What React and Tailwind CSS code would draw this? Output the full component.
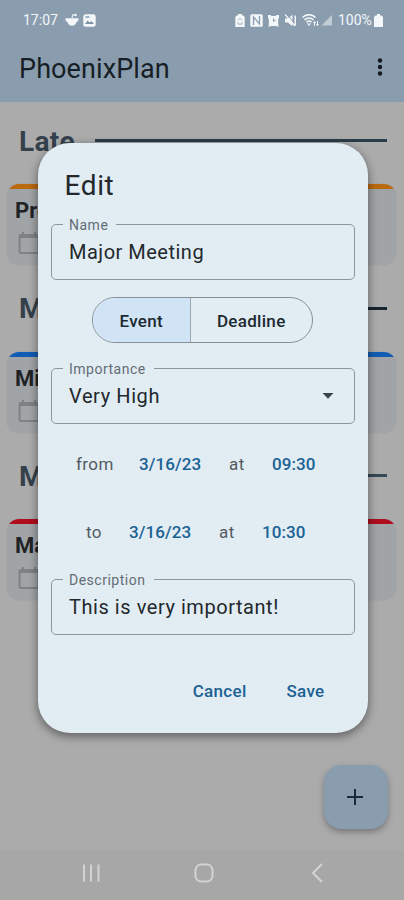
import React from "react";

const sections = [
  { heading: "Late", item: "Pro", accent: "bg-[#bb6a0d]", rule: "bg-[#2b3d49]" },
  { heading: "M", item: "Mi", accent: "bg-[#125cb4]", rule: "bg-[#17252f]" },
  { heading: "M", item: "Ma", accent: "bg-[#b00d1e]", rule: "bg-[#364854]" },
];

function StatusBar() {
  return (
    <div className="flex h-10 items-center pl-[23px] pr-[21px] text-[14px] text-[#f3f7fa]">
      <span className="w-[37px]">17:07</span>
      <svg className="ml-[5px] h-[14px] w-[14px]" viewBox="0 0 14 14" fill="currentColor">
        <path d="M.6 5.200h12.800c.6 2-.6 3.300-1.800 3.500C11 11.500 9.300 12.700 7 12.700s-4-1.200-4.600-4C1.200 8.500 0 7.200.600 5.200Z" />
        <circle cx="10.500" cy="2" r="1.300" />
        <path d="M7 5.200 7.700 1.700l2.300.300" fill="none" stroke="currentColor" />
      </svg>
      <svg className="ml-[4px] h-[13px] w-[13px]" viewBox="0 0 13 13">
        <rect x=".3" y=".3" width="12.400" height="12.400" rx="2.500" fill="currentColor" />
        <path d="m2 10 2.600-3.500 2 2 1.700-1.500L11 10Z" fill="#7d92a4" />
        <path d="M2.500 3h4" stroke="#8a9dae" strokeWidth="1.500" />
      </svg>
      <div className="ml-auto flex items-center">
        <svg className="h-[13px] w-[10px]" viewBox="0 0 10 13">
          <path d="M3 0h4v1.500h1.500L9.700 3v10H.300V3l1.200-1.500H3Z" fill="currentColor" />
          <path d="M3 6.500 5 4.200l2 2.300M3 8v2.200h4V8" fill="none" stroke="#a9b7c3" />
        </svg>
        <svg className="ml-[5px] h-[13px] w-[13px]" viewBox="0 0 13 13">
          <rect x=".3" y=".3" width="12.400" height="12.400" rx="1.500" fill="currentColor" />
          <path d="M3.500 11V3l6 7V2" fill="none" stroke="#8a9dae" strokeWidth="1.300" />
        </svg>
        <svg className="ml-[5px] h-[13px] w-[11px]" viewBox="0 0 11 13">
          <path d="M0 1h2.500L3.500 2h4l1-1H11v3l-.8 1v6.500l.8 1H9L8 12H3l-1 .5H0l.8-1V5L0 4Z" fill="currentColor" />
          <path d="M5.500 4.300v3L7.700 6" fill="none" stroke="#8a9dae" />
        </svg>
        <svg className="ml-[6px] h-[13px] w-[12px]" viewBox="0 0 12 13" fill="currentColor">
          <path d="M0 4.500h3L7.500.800v11.400L3 8.500H0ZM9.500 1.500H11v10H9.500Z" />
          <path d="m0 .500 10 11.500" stroke="currentColor" strokeWidth="1.200" />
          <path d="m2 .500 7 8" stroke="#8a9dae" strokeWidth="1" />
        </svg>
        <svg className="ml-[5px] h-[13px] w-[17px]" viewBox="0 0 17 13" fill="none" stroke="currentColor">
          <path d="M.500 3.500C4-.300 10-.300 13.500 3.500M2.500 6C5 3.300 9 3.300 11.500 6M4.500 8.300c1.500-1.600 3.500-1.600 5 0" strokeWidth="1.500" />
          <path d="m5.500 9.500 1.500 2 1.500-2" fill="currentColor" />
          <path d="M12.500 12V7.500m-1.300 1.300 1.300-1.300 1.300 1.300M15.500 7v4.500m-1.200-1.200 1.200 1.200 1-1.200" />
        </svg>
        <svg className="ml-[2px] h-[12px] w-[11px]" viewBox="0 0 11 12">
          <path d="M11 1v10.500H.500Z" fill="#c2ccd5" />
        </svg>
        <span className="ml-[6px] w-[35px] whitespace-nowrap text-[14px]">100%</span>
        <svg className="ml-[1px] h-[13px] w-[9px]" viewBox="0 0 9 13" fill="currentColor">
          <path d="M3 0h3v1.500h1.500L9 3v10H0V3l1.500-1.500H3Z" />
        </svg>
      </div>
    </div>
  );
}

function AgendaSection({ heading, item, accent, rule }) {
  return (
    <section className="h-[167.500px]">
      <div className="flex h-[59px] items-center gap-[19px] pl-[19px] pr-[17px]">
        <h2 className="w-[57px] whitespace-nowrap text-[28px] font-bold leading-none tracking-[0.300px] text-[#34414c]">{heading}</h2>
        <div className={"mt-[-2px] h-[3px] flex-1 " + rule} />
      </div>
      <article className="ml-[6px] mr-[7px] mt-[12px] h-[83px] overflow-hidden rounded-[13px] border border-[#a4a7a9] bg-[#a0a4a6]">
        <div className={"h-[5px] " + accent} />
        <h3 className="pl-[8px] pt-[8px] text-[22px] font-bold leading-[27px] text-[#1f2326]">{item}</h3>
        <svg className="ml-[11px] mt-[7px] h-[24px] w-[22px]" viewBox="0 0 22 24" fill="none" stroke="#7e8285" strokeWidth="2">
          <rect x="1.500" y="4" width="19" height="18" rx="1.500" />
          <path d="M1 6h20M5 1v4M17 1v4" />
        </svg>
      </article>
    </section>
  );
}

function Field({ label, value, labelWidth, spacing, select, className }) {
  return (
    <fieldset className={"h-[64px] rounded-[5px] border border-[#8b979e] pl-[11px] pr-[20px] " + className}>
      <legend className={"h-[16px] whitespace-nowrap pl-[6px] text-[14px] leading-[18px] tracking-[0.500px] text-[#646d73] " + labelWidth}>{label}</legend>
      <div className="flex h-[40px] items-center justify-between pl-[6px]">
        <span className={"whitespace-nowrap text-[20px] leading-[24px] text-[#22282c] " + spacing}>{value}</span>
        {select && (
          <svg className="h-[6px] w-[12px]" viewBox="0 0 12 6" fill="#39444a">
            <path d="M.500 0h11L6 5.700Z" />
          </svg>
        )}
      </div>
    </fieldset>
  );
}

function DateRow({ label, labelClass, date, time }) {
  return (
    <div className="flex h-[68px] items-center text-[17px] tracking-[0.400px] text-[#535b61]">
      <span className={labelClass}>{label}</span>
      <span className="w-[64px] whitespace-nowrap font-medium tracking-[0.100px] text-[#1b6293]">{date}</span>
      <span className="ml-[26px] w-[16px]">at</span>
      <span className="ml-[27px] whitespace-nowrap font-medium tracking-[0.100px] text-[#1b6293]">{time}</span>
    </div>
  );
}

function EditDialog() {
  return (
    <div role="dialog" className="absolute left-[37.500px] top-[143px] flex h-[590px] w-[330.500px] flex-col rounded-[32px] bg-[#e1ecf3] px-[13.500px] shadow-[0_3px_9px_1px_rgba(0,0,0,0.4)]">
      <h2 className="mt-[26px] pl-[13.500px] text-[28px] leading-[34px] tracking-[0.600px] text-[#22282c]">Edit</h2>
      <Field className="mt-[13px]" label="Name" value="Major Meeting" labelWidth="w-[53px]" spacing="tracking-[0.500px]" />
      <div className="ml-[40.500px] mt-[17px] flex h-[46px] w-[221px] overflow-hidden rounded-full border border-[#849096] text-[17px] font-medium leading-[20px] tracking-[0.300px] text-[#1d2930]">
        <span className="flex w-[98.500px] items-center justify-center border-r border-[#9ba8b0] bg-[#d1e4f5] pt-[2px]">Event</span>
        <span className="flex flex-1 items-center justify-center pt-[2px]">Deadline</span>
      </div>
      <Field className="mt-[17px]" label="Importance" value="Very High" labelWidth="w-[91px]" spacing="tracking-[0.600px]" select />
      <div className="mt-[7px]">
        <DateRow label="from" date="3/16/23" time="09:30" labelClass="pl-[25px] w-[88px]" />
        <DateRow label="to" date="3/16/23" time="10:30" labelClass="pl-[35px] w-[78px]" />
      </div>
      <Field className="mt-[4px]" label="Description" value="This is very important!" labelWidth="w-[91px]" spacing="tracking-[0.550px]" />
      <div className="mt-[40px] flex h-[34px] items-center justify-end gap-[40px] pr-[30px] text-[17px] font-medium tracking-[0.300px] text-[#1b6293]">
        <button className="whitespace-nowrap">Cancel</button>
        <button className="whitespace-nowrap">Save</button>
      </div>
    </div>
  );
}

export default function App() {
  return (
    <div className="relative flex h-[900px] w-[404px] flex-col overflow-hidden bg-[#ababac] font-[Roboto,sans-serif]">
      <header className="h-[102px] bg-[#8a9dae]">
        <StatusBar />
        <div className="flex h-[55px] items-center justify-between pl-[19px] pr-[21px]">
          <h1 className="pt-[3px] text-[27px] leading-none tracking-[0.100px] text-[#171e25]">PhoenixPlan</h1>
          <svg className="h-[20px] w-[6px]" viewBox="0 0 6 20" fill="#171820">
            <circle cx="3" cy="2.500" r="2.200" /><circle cx="3" cy="9" r="2.200" /><circle cx="3" cy="15.500" r="2.200" />
          </svg>
        </div>
      </header>
      <main className="h-[748px] pt-[10px]">
        {sections.map((s, i) => <AgendaSection key={i} {...s} />)}
      </main>
      <nav className="flex h-[50px] items-center bg-[#a7a7a7] pl-[82px]">
        <svg className="mt-[-4px] h-[18px] w-[18px]" viewBox="0 0 18 18" stroke="#d3d3d3" strokeWidth="2">
          <path d="M2 .500v17M9 .500v17M16.500 .500v17" />
        </svg>
        <svg className="ml-[94px] mt-[-4px] h-[20px] w-[20px]" viewBox="0 0 20 20" fill="none" stroke="#d3d3d3" strokeWidth="2">
          <rect x="1.500" y="1.500" width="17" height="17" rx="5.500" />
        </svg>
        <svg className="ml-[97px] mt-[-4px] h-[20px] w-[13px]" viewBox="0 0 13 20" fill="none" stroke="#d3d3d3" strokeWidth="2">
          <path d="m11 1-9 9 9 9" />
        </svg>
      </nav>
      <button aria-label="Add" className="absolute left-[324px] top-[765px] flex h-[64px] w-[64px] items-center justify-center rounded-[18px] bg-[#8a9dae] shadow-[0_3px_6px_rgba(0,0,0,0.3)]">
        <svg className="ml-[-2px] h-[16px] w-[16px]" viewBox="0 0 16 16" stroke="#182b3a" strokeWidth="2">
          <path d="M8 0v16M0 8h16" />
        </svg>
      </button>
      <EditDialog />
    </div>
  );
}
